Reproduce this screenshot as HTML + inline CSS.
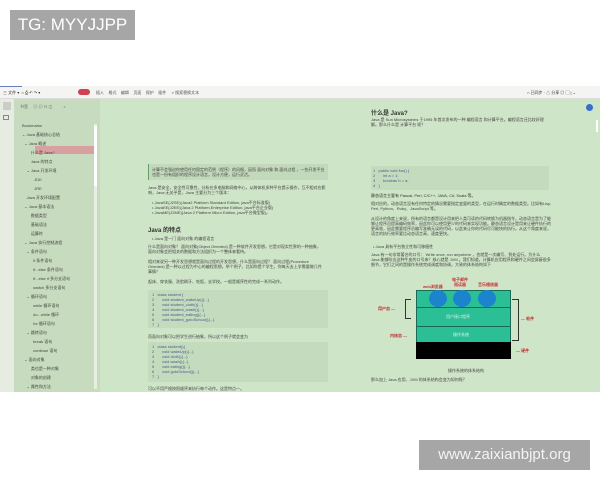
<!DOCTYPE html>
<html><head><meta charset="utf-8"><style>
*{margin:0;padding:0;box-sizing:border-box}
body{width:600px;height:480px;background:#fff;position:relative;overflow:hidden;font-family:"Liberation Sans","Noto Sans CJK SC",sans-serif}
.a{position:absolute}
.t{position:absolute;font-size:4px;line-height:5px;color:#444;white-space:nowrap;overflow:hidden}
.s{position:absolute;font-size:4px;color:#333;white-space:nowrap}
</style></head><body>
<div class="a" style="left:10px;top:10px;width:125px;height:30px;background:#a6a6a6;color:#fff;font-size:17px;line-height:30px;text-align:center">TG: MYYJJPP</div>

<div class="a" style="left:0;top:86px;width:600px;height:13px;background:#f4f4f2;border-bottom:1px solid #ddd"></div>
<div class="a" style="left:0;top:86px;width:22px;height:1px;background:#6a7fc0"></div>
<div class="s" style="left:3px;top:90px">三 文件 ▾ &nbsp;⌂ ⎙ ↶ ↷ ▾</div>
<div class="a" style="left:78px;top:89px;width:12px;height:6px;border-radius:3px;background:#d04050"></div>
<div class="s" style="left:96px;top:90px;color:#555">插入 &nbsp; &nbsp;格式 &nbsp; &nbsp;编辑 &nbsp; &nbsp;页面 &nbsp; &nbsp;保护 &nbsp; &nbsp;插件 &nbsp; &nbsp; ⌕ 搜索替换文本</div>
<div class="s" style="left:527px;top:90px">⌂ 已同步 · △ 分享 ◎ ▢ | ⌄</div>

<div class="a" style="left:0;top:99px;width:600px;height:293px;background:#cfe5c8"></div>
<div class="a" style="left:0;top:99px;width:14px;height:293px;background:#e6ece2"></div>
<div class="a" style="left:3px;top:102px;width:8px;height:8px;background:#c9cfc6"></div>
<div class="a" style="left:3px;top:115px;width:6px;height:5px;border:1px solid #888"></div>
<div class="a" style="left:14px;top:99px;width:86px;height:293px;background:#c7dcbe"></div>
<div class="s" style="left:20px;top:104px;color:#666">书签 &nbsp; &nbsp; ▤ ▤ ☷ ◫ &nbsp; &nbsp; &nbsp; &nbsp; &nbsp;×</div>
<div class="a" style="left:94px;top:124px;width:3px;height:265px;background:#e8eee4"></div>
<div class="a" style="left:94px;top:126px;width:3px;height:60px;background:#fff"></div>
<div class="a" style="left:35px;top:146px;width:59px;height:8px;background:#d8a0a0"></div>
<div class="t" style="left:22px;top:121px;width:72px;line-height:9px;font-size:4px">
Bookmarks<br>⌄ Java 基础核心总结<br>&nbsp; ⌄ Java 概述<br>&nbsp; &nbsp; &nbsp; &nbsp; 什么是 Java?<br>&nbsp; &nbsp; &nbsp; &nbsp; Java 的特点<br>&nbsp; &nbsp; ⌄ Java 开发环境<br>&nbsp; &nbsp; &nbsp; &nbsp; &nbsp; &nbsp;JDK<br>&nbsp; &nbsp; &nbsp; &nbsp; &nbsp; &nbsp;JRE<br>&nbsp; &nbsp; Java 开发环境配置<br>&nbsp; ⌄ Java 基本语法<br>&nbsp; &nbsp; &nbsp; &nbsp; 数据类型<br>&nbsp; &nbsp; &nbsp; &nbsp; 基础语法<br>&nbsp; &nbsp; &nbsp; &nbsp; 运算符<br>&nbsp; ⌄ Java 执行控制流程<br>&nbsp; &nbsp; ⌄ 条件语句<br>&nbsp; &nbsp; &nbsp; &nbsp; &nbsp; if 条件语句<br>&nbsp; &nbsp; &nbsp; &nbsp; &nbsp; if...else 条件语句<br>&nbsp; &nbsp; &nbsp; &nbsp; &nbsp; if...else if 多分支语句<br>&nbsp; &nbsp; &nbsp; &nbsp; &nbsp; switch 多分支语句<br>&nbsp; &nbsp; ⌄ 循环语句<br>&nbsp; &nbsp; &nbsp; &nbsp; &nbsp; while 循环语句<br>&nbsp; &nbsp; &nbsp; &nbsp; &nbsp; do...while 循环<br>&nbsp; &nbsp; &nbsp; &nbsp; &nbsp; for 循环语句<br>&nbsp; &nbsp; ⌄ 跳转语句<br>&nbsp; &nbsp; &nbsp; &nbsp; &nbsp; break 语句<br>&nbsp; &nbsp; &nbsp; &nbsp; &nbsp; continue 语句<br>&nbsp; ⌄ 面向对象<br>&nbsp; &nbsp; &nbsp; &nbsp; 类也是一种对象<br>&nbsp; &nbsp; &nbsp; &nbsp; 对象的创建<br>&nbsp; &nbsp; ⌄ 属性和方法</div>

<div class="a" style="left:148px;top:164px;width:180px;height:16px;background:#c3d9bb;border-left:1px solid #6a9a6a"></div>
<div class="t" style="left:152px;top:167px;width:175px">计算不会强迫你使用任何固定的范例（程序）的风格，因而 面向对象 和 面向过程 ，一些开发平台<br>也是一份有组织的程序设计语言，设计方便，运行灵活。</div>
<div class="t" style="left:148px;top:185px;width:180px">Java 是安全，安全性可靠性，分析在多电脑和网络中心，从跨体机多种平台提示操作，互不相对应影<br>响，Java 无关乎是，Java 主要分为三个版本：</div>
<div class="t" style="left:152px;top:200px;width:175px">• JavaSE(J2SE)(Java2 Platform Standard Edition, java平台标准版)<br>• JavaEE(J2EE)(Java 2 Platform,Enterprise Edition, java平台企业版)<br>• JavaME(J2ME)(Java 2 Platform Micro Edition, java平台微型版)。</div>
<div class="s" style="left:148px;top:225px;font-size:6px;font-weight:bold;color:#333">Java 的特点</div>
<div class="t" style="left:152px;top:236px;width:175px">• Java 是一门 面向对象 的编程语言</div>
<div class="t" style="left:148px;top:244px;width:180px">什么是面向对象？ 面向对象(Object Oriented) 是一种软件开发思想。它是对现实世界的一种抽象，<br>面向对象会把相关的数据和方法组织为一个整体来看待。<br><br>相对来说另一种开发思想就是面向过程的开发思想，什么是面向过程？ 面向过程(Procedure<br>Oriented) 是一种以过程为中心的编程思想。举个例子，比如你是个学生，你每天去上学需要做几件<br>事情？<br><br>起床、穿衣服、洗脸刷牙、吃饭，去学校。一般是顺序性的完成一系列动作。</div>
<div class="a" style="left:148px;top:290px;width:180px;height:38px;background:#c5dbbd"></div>
<div class="t" style="left:152px;top:292px;width:170px;color:#4a5a8a">1 &nbsp; class student {<br>2 &nbsp; &nbsp; &nbsp; void student_wakeUp(){...}<br>3 &nbsp; &nbsp; &nbsp; void student_cloth(){...}<br>4 &nbsp; &nbsp; &nbsp; void student_wash(){...}<br>5 &nbsp; &nbsp; &nbsp; void student_eating(){...}<br>6 &nbsp; &nbsp; &nbsp; void student_gotoSchool(){...}<br>7 &nbsp; }</div>
<div class="t" style="left:148px;top:334px;width:180px">而面向对象可以把学生进行抽象，所以这个例子就会变为</div>
<div class="a" style="left:148px;top:342px;width:180px;height:40px;background:#c5dbbd"></div>
<div class="t" style="left:152px;top:344px;width:170px;color:#4a5a8a">1 &nbsp; class student(){<br>2 &nbsp; &nbsp; &nbsp; void wakeUp(){...}<br>3 &nbsp; &nbsp; &nbsp; void cloth(){...}<br>4 &nbsp; &nbsp; &nbsp; void wash(){...}<br>5 &nbsp; &nbsp; &nbsp; void eating(){...}<br>6 &nbsp; &nbsp; &nbsp; void gotoSchool(){...}<br>7 &nbsp; }</div>
<div class="t" style="left:148px;top:386px;width:180px">可以不用严格按照顺序来执行每个动作。这是特点一。</div>

<div class="s" style="left:371px;top:108px;font-size:6px;font-weight:bold;color:#333">什么是 Java?</div>
<div class="t" style="left:371px;top:117px;width:180px">Java 是 Sun Microsystems 于1995 年首次发布的一种 编程语言 和计算平台。编程语言还比较好理<br>解。那么什么是 计算平台 呢？</div>
<div class="a" style="left:371px;top:166px;width:178px;height:24px;background:#c5dbbd"></div>
<div class="t" style="left:373px;top:168px;width:170px;color:#4a5a8a">1 &nbsp; public void fun() {<br>2 &nbsp; &nbsp; &nbsp; int a = 1;<br>3 &nbsp; &nbsp; &nbsp; boolean b = a;<br>4 &nbsp; }</div>
<div class="t" style="left:371px;top:193px;width:180px;color:#333">静态语言主要有 Pascal, Perl, C/C++, JAVA, C#, Scala 等。</div>
<div class="t" style="left:371px;top:201px;width:180px">相对应的，动态语言没有任何特定的情况需要指定变量的类型，在运行时确定的数据类型。比如有Lisp,<br>Perl, Python、Ruby、JavaScript 等。<br><br>从设计的角度上来说，所有的语言都是设计用来把人类可读的代码转换为机器指令。动态语言是为了能<br>够让程序员提高编码效率，因此你可以使用更少的代码来实现功能。静态语言设计是用来让硬件执行的<br>更高效，因此需要程序员编写准确无误的代码，以此来让你的代码尽可能快的执行。从这个角度来说，静态<br>语言的执行效率要比动态语言高，速度更快。</div>
<div class="t" style="left:373px;top:244px;width:175px">• Java 具有平台独立性和可移植性</div>
<div class="t" style="left:371px;top:252px;width:180px">Java 有一句非常著名的口号： Write once, run anywhere ，也就是一次编写、到处运行。为什么<br>Java 能够吹出这种牛皮的口号来？核心就是 JVM 。我们知道，计算机应用程序和硬件之间会屏蔽很多<br>细节，它们之间的是操作系统完成调度和协调，大致的体系结构如下</div>

<div class="a" style="left:416px;top:290px;width:95px;height:53px;background:#2bbf96;border:1px solid #1b6a58"></div>
<div class="a" style="left:416px;top:307px;width:95px;height:1px;background:#1b6a58"></div>
<div class="a" style="left:416px;top:326px;width:95px;height:1px;background:#1b6a58"></div>
<div class="a" style="left:416px;top:342px;width:95px;height:17px;background:#000"></div>
<div class="a" style="left:429px;top:290px;width:18px;height:17px;border-radius:50%;background:#1b84cc"></div>
<div class="a" style="left:453px;top:290px;width:18px;height:17px;border-radius:50%;background:#1b84cc"></div>
<div class="a" style="left:478px;top:290px;width:18px;height:17px;border-radius:50%;background:#1b84cc"></div>
<div class="s" style="left:446px;top:314px;color:#d8f3ea">用户接口程序</div>
<div class="s" style="left:453px;top:332px;color:#d8f3ea">操作系统</div>
<div class="s" style="left:423px;top:284px;color:#c03030;font-weight:bold">web浏览器</div>
<div class="s" style="left:452px;top:277px;color:#c03030;font-weight:bold;line-height:5px;text-align:center">电子邮件<br>阅读器</div>
<div class="s" style="left:478px;top:282px;color:#c03030;font-weight:bold">音乐播放器</div>
<div class="s" style="left:378px;top:306px;color:#c03030;font-weight:bold">用户态 —</div>
<div class="a" style="left:405px;top:299px;width:6px;height:20px;border:1px solid #333;border-right:none"></div>
<div class="s" style="left:390px;top:333px;color:#c03030;font-weight:bold">内核态 —</div>
<div class="a" style="left:512px;top:299px;width:7px;height:42px;border:1px solid #333;border-left:none"></div>
<div class="s" style="left:521px;top:316px;color:#c03030;font-weight:bold">— 软件</div>
<div class="s" style="left:516px;top:348px;color:#c03030;font-weight:bold">— 硬件</div>
<div class="t" style="left:448px;top:368px;width:60px">操作系统的体系结构</div>
<div class="t" style="left:371px;top:377px;width:180px">那么加上 Java 应用、JVM 的体系结构会变为如何呢？</div>

<div class="a" style="left:586px;top:104px;width:7px;height:7px;border-radius:50%;background:#3a6cd0"></div>
<div class="a" style="left:596px;top:120px;width:2px;height:12px;background:#fff"></div>

<div class="a" style="left:419px;top:440px;width:171px;height:30px;background:#a6a6a6;color:#f4f4f4;font-size:15px;line-height:30px;text-align:center">www.zaixianbjpt.org</div>
</body></html>
